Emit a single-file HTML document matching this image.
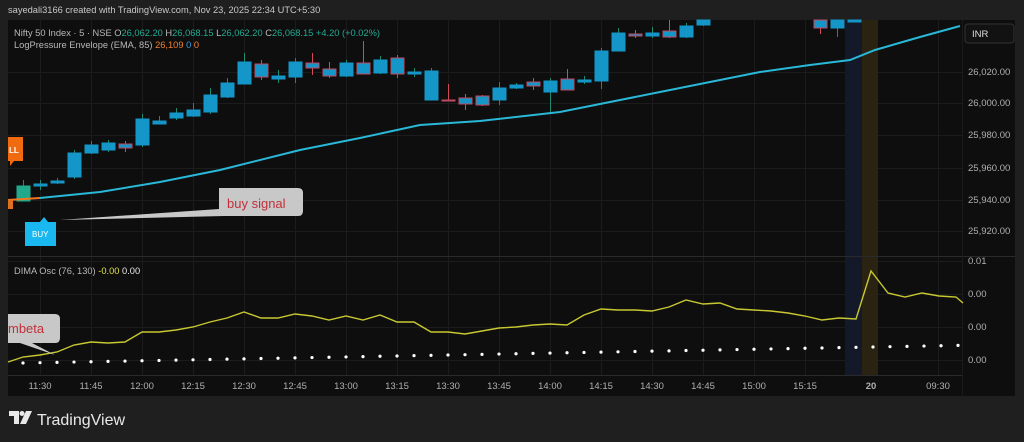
<!DOCTYPE html>
<html><head><meta charset="utf-8"><style>
html,body{margin:0;padding:0;background:#1f1f1f;width:1024px;height:442px;overflow:hidden;font-family:"Liberation Sans",sans-serif}
svg{position:absolute;left:0;top:0}
</style></head><body>
<svg id="s" width="1024" height="442" xmlns="http://www.w3.org/2000/svg">
<rect x="0" y="0" width="1024" height="442" fill="#1f1f1f"/>
<rect x="8" y="20" width="1007" height="376" fill="#0e0e0e"/>
<g id="grid" stroke="#1c1c1c" stroke-width="1"></g>
<rect x="845" y="20" width="17" height="355" fill="#14192a"/>
<rect x="862" y="20" width="16" height="355" fill="#2a2312"/>
<line x1="8" y1="256.5" x2="1015" y2="256.5" stroke="#2a2a2a"/>
<line x1="8" y1="375.5" x2="962" y2="375.5" stroke="#2a2a2a"/>
<line x1="962.5" y1="20" x2="962.5" y2="396" stroke="#1a1a1a"/>
<g id="candles"></g>
<polyline fill="none" stroke="#f07820" stroke-width="2" points="8,200 40,198"/>
<polyline fill="none" stroke="#29b8d8" stroke-width="2" points="40,198 100,192 160,182 220,170 300,150 360,138 420,125 480,121 560,112 610,102 660,92 710,82 760,72 810,65 850,60 875,50 920,37 960,26"/>
<polyline id="osc" fill="none" stroke="#c8c832" stroke-width="1.4"/>
<g id="dots" fill="#fff"></g>
<text x="8" y="13" font-size="9.3" fill="#c8c8c8">sayedali3166 created with TradingView.com, Nov 23, 2025 22:34 UTC+5:30</text>
<text x="14" y="36" font-size="9.3" fill="#b8b8b8">Nifty 50 Index · 5 · NSE  O<tspan fill="#22ab94">26,062.20</tspan>  H<tspan fill="#22ab94">26,068.15</tspan>  L<tspan fill="#22ab94">26,062.20</tspan>  C<tspan fill="#22ab94">26,068.15</tspan>  <tspan fill="#22ab94">+4.20 (+0.02%)</tspan></text>
<text x="14" y="48" font-size="9.3" fill="#b8b8b8">LogPressure Envelope (EMA, 85)  <tspan fill="#f08030">26,109</tspan>  <tspan fill="#2f9fe0">0</tspan>  <tspan fill="#f08030">0</tspan></text>
<text x="14" y="274" font-size="9.3" fill="#b8b8b8">DIMA Osc (76, 130)  <tspan fill="#e0e040">-0.00</tspan>  <tspan fill="#e8e8e8">0.00</tspan></text>
<rect x="965" y="24" width="49" height="19" rx="3" fill="#121212" stroke="#333"/>
<text x="972" y="37" font-size="9.5" fill="#ddd">INR</text>
<g font-size="9.5" fill="#b0b0b0">
<text x="968" y="75">26,020.00</text><text x="968" y="106">26,000.00</text><text x="968" y="138">25,980.00</text><text x="968" y="171">25,960.00</text><text x="968" y="203">25,940.00</text><text x="968" y="234">25,920.00</text>
<text x="968" y="264">0.01</text><text x="968" y="297">0.00</text><text x="968" y="330">0.00</text><text x="968" y="363">0.00</text>
</g>
<g id="times" font-size="9.5" fill="#b0b0b0" text-anchor="middle"></g>
<path d="M8,137 H23 V161 H14 L10,166 V161 H8Z" fill="#f06a10"/>
<text x="9" y="153" font-size="8" fill="#fff" font-weight="bold">LL</text>
<rect x="8" y="200" width="5" height="9" fill="#e07020"/>
<path d="M25,222 H40 L44,217 L48,222 H56 V246 H25Z" fill="#1ab8f0"/>
<text x="32" y="237" font-size="8" fill="#fff">BUY</text>
<path d="M219,188 H298 Q303,188 303,193 V211 Q303,216 298,216 H224 L60,220 L219,209 Z" fill="#c8c8c8"/>
<text x="227" y="208" font-size="13" fill="#c0303a">buy signal</text>
<path d="M8,314 H55 Q60,314 60,319 V338 Q60,343 55,343 H32 L55,355 L20,343 H8Z" fill="#c8c8c8"/>
<text x="8" y="333" font-size="13" fill="#c0303a">mbeta</text>
<g transform="translate(9,411)" fill="#e8e8e8">
<path d="M0,0 H10 V13 H5 V5 H0Z"/><circle cx="13" cy="2.5" r="2.5"/><path d="M17,0 H23 L17,13 H11Z"/>
</g>
<text x="37" y="425" font-size="16" fill="#e8e8e8">TradingView</text>
</svg>
<script>
var ns="http://www.w3.org/2000/svg";
function el(p,t,a){var e=document.createElementNS(ns,t);for(var k in a)e.setAttribute(k,a[k]);document.getElementById(p).appendChild(e);return e;}
[40,91,142,193,244,295,346,397,448,499,550,601,652,703,754,805,871,938].forEach(function(x){el('grid','line',{x1:x+.5,y1:20,x2:x+.5,y2:375});});
[72,103,135,168,200,231,261,294,327,360].forEach(function(y){el('grid','line',{x1:8,y1:y+.5,x2:962,y2:y+.5});});
var C=[[23,186,201,180,201,0,1],[40,184,186,180,190,0],[57,181,183,178,184,0],[74,153,177,150,179,0],[91,145,153,141,154,0],[108,143,150,140,152,0],[125,144,148,141,152,1],[142,119,145,114,147,0],[159,121,124,116,124,0],[176,113,118,108,120,0],[193,110,116,103,117,0],[210,95,112,88,114,0],[227,83,97,78,98,0],[244,62,84,53,84,0],[261,64,77,60,80,1],[278,76,79,70,83,0],[295,62,77,58,83,0],[312,63,68,53,75,1],[329,69,76,62,78,1],[346,63,76,60,77,0],[363,63,74,41,74,1],[380,60,73,56,74,0],[397,58,74,55,78,1],[414,72,74,68,77,0],[431,71,100,68,100,0],[448,100,101,84,101,1],[465,98,104,94,110,1],[482,96,105,95,106,1],[499,88,100,82,105,0],[516,85,88,83,89,0],[533,82,86,78,90,1],[550,81,92,78,112,0],[567,79,90,69,90,1],[584,80,82,76,84,0],[601,51,81,48,89,0],[618,33,51,28,51,0],[635,34,36,30,38,1],[652,33,36,27,38,0],[669,31,37,20,38,1],[686,26,37,23,38,0],[703,20,25,20,26,0],[820,20,28,20,34,1],[837,20,28,20,37,0],[854,20,22,20,22,0]];
C.forEach(function(c){var x=c[0],col=c[5]?'#d24a5a':'#1f8a6e';
el('candles','line',{x1:x+.5,y1:c[3],x2:x+.5,y2:c[4],stroke:col,'stroke-width':1});
el('candles','rect',{x:x-6,y:c[1],width:13,height:Math.max(1,c[2]-c[1]),fill:c[6]?'#22a98c':'#1596c8',stroke:c[6]?'#22a98c':(c[5]?'#c04a60':'#1596c8'),'stroke-width':1});});
document.getElementById('osc').setAttribute('points',"8,362 23,357 40,355 57,352 74,345 91,342 108,343 125,342 142,332 159,332 176,330 193,327 210,322 227,318 244,312 261,318 278,318 295,314 312,316 329,320 346,316 363,320 380,315 397,322 414,322 431,332 448,332 465,334 482,331 499,328 516,327 533,325 550,324 567,325 584,315 601,309 618,310 635,310 652,311 669,307 686,300 703,304 720,303 737,309 754,310 771,311 788,313 805,316 822,320 839,318 856,319 871,271 888,293 905,297 922,293 939,296 956,297 963,303");
for(var i=0;i<56;i++){var x=23+i*17;if(x>960)break;el('dots','circle',{cx:x,cy:363-i*0.32,r:1.6});}
var T=[[40,"11:30"],[91,"11:45"],[142,"12:00"],[193,"12:15"],[244,"12:30"],[295,"12:45"],[346,"13:00"],[397,"13:15"],[448,"13:30"],[499,"13:45"],[550,"14:00"],[601,"14:15"],[652,"14:30"],[703,"14:45"],[754,"15:00"],[805,"15:15"],[871,"20"],[938,"09:30"]];
T.forEach(function(t){var e=el('times','text',{x:t[0],y:389});e.textContent=t[1];if(t[1]=="20")e.setAttribute('font-weight','bold');});
</script>
</body></html>
